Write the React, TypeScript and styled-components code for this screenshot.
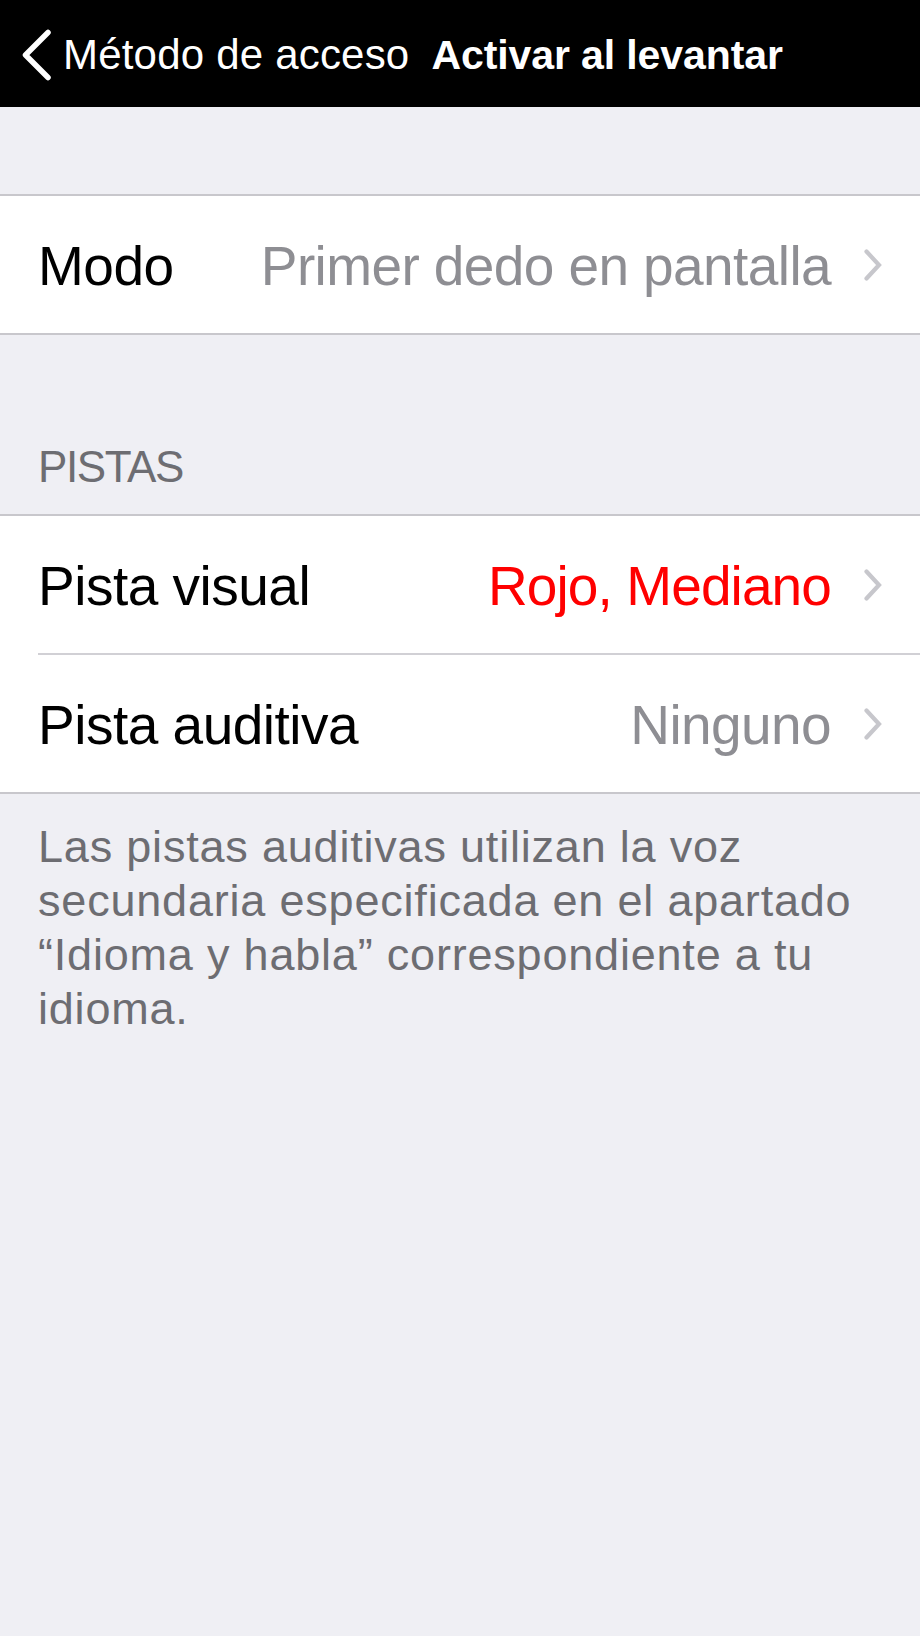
import React from "react";
import styled, { createGlobalStyle } from "styled-components";

const GlobalStyle = createGlobalStyle`
  html, body {
    margin: 0;
    padding: 0;
    background: #efeff4;
  }
  body {
    font-family: "Liberation Sans", Arial, sans-serif;
    -webkit-font-smoothing: antialiased;
  }
  * { box-sizing: border-box; }
`;

const Page = styled.div`
  min-height: 1636px;
  background: #efeff4;
  display: flex;
  flex-direction: column;
`;

const NavBar = styled.header`
  height: 107px;
  background: #000;
  display: flex;
  align-items: center;
  padding: 3px 0 0 21px;
  color: #fff;
`;

const BackButton = styled.div`
  display: flex;
  align-items: center;
  gap: 11px;
`;

const BackLabel = styled.span`
  font-size: 42px;
  letter-spacing: 0.2px;
  white-space: nowrap;
`;

const Title = styled.h1`
  margin: 0 0 0 22px;
  font-size: 41px;
  font-weight: 700;
  letter-spacing: -0.1px;
  white-space: nowrap;
`;

const Group = styled.section<{ $top: number }>`
  margin-top: ${(p) => p.$top}px;
  background: #fff;
  border-top: 2px solid #c8c7cc;
  border-bottom: 2px solid #c8c7cc;
  display: flex;
  flex-direction: column;
`;

const Row = styled.div<{ $divider?: boolean }>`
  height: ${(p) => (p.$divider ? 139 : 137)}px;
  margin-left: 38px;
  padding: 2px 38px 0 0;
  display: flex;
  align-items: center;
  border-top: ${(p) => (p.$divider ? "2px solid #d1d0d5" : "none")};
`;

const Label = styled.span`
  font-size: 55px;
  letter-spacing: -0.5px;
  color: #000;
  white-space: nowrap;
`;

const Value = styled.span<{ $accent?: boolean }>`
  margin-left: auto;
  font-size: 55px;
  letter-spacing: ${(p) => (p.$accent ? "-0.9px" : "-0.6px")};
  color: ${(p) => (p.$accent ? "#ff0000" : "#8e8e93")};
  white-space: nowrap;
`;

const Chevron = styled.svg`
  margin-left: 33px;
  flex: none;
  margin-top: -2px;
`;

const SectionHeader = styled.h2`
  margin: 0;
  padding: 106px 38px 21px;
  font-size: 44px;
  line-height: 52px;
  font-weight: 400;
  letter-spacing: -1.4px;
  color: #6d6d72;
`;

const Footer = styled.p`
  margin: 0;
  padding: 26px 30px 0 38px;
  font-size: 45px;
  line-height: 54px;
  letter-spacing: 0.8px;
  color: #6d6d72;
`;

const Disclosure = () => (
  <Chevron width="18" height="32" viewBox="0 0 18 32" aria-hidden>
    <polyline
      points="2.5,2.5 15,16 2.5,29.5"
      fill="none"
      stroke="#c7c7cc"
      strokeWidth="4.2"
      strokeLinecap="round"
      strokeLinejoin="miter"
    />
  </Chevron>
);

const BackChevron = () => (
  <svg width="31" height="52" viewBox="0 0 31 52" aria-hidden>
    <polyline
      points="27,3.5 4.5,26 27,48.5"
      fill="none"
      stroke="#fff"
      strokeWidth="5.5"
      strokeLinecap="round"
      strokeLinejoin="round"
    />
  </svg>
);

export default function App() {
  return (
    <>
      <GlobalStyle />
      <Page>
        <NavBar>
          <BackButton>
            <BackChevron />
            <BackLabel>Método de acceso</BackLabel>
          </BackButton>
          <Title>Activar al levantar</Title>
        </NavBar>

        <Group $top={87}>
          <Row>
            <Label>Modo</Label>
            <Value>Primer dedo en pantalla</Value>
            <Disclosure />
          </Row>
        </Group>

        <SectionHeader>PISTAS</SectionHeader>

        <Group $top={0}>
          <Row>
            <Label>Pista visual</Label>
            <Value $accent>Rojo, Mediano</Value>
            <Disclosure />
          </Row>
          <Row $divider>
            <Label>Pista auditiva</Label>
            <Value>Ninguno</Value>
            <Disclosure />
          </Row>
        </Group>

        <Footer>
          Las pistas auditivas utilizan la voz secundaria especificada en el
          apartado “Idioma y habla” correspondiente a tu idioma.
        </Footer>
      </Page>
    </>
  );
}
